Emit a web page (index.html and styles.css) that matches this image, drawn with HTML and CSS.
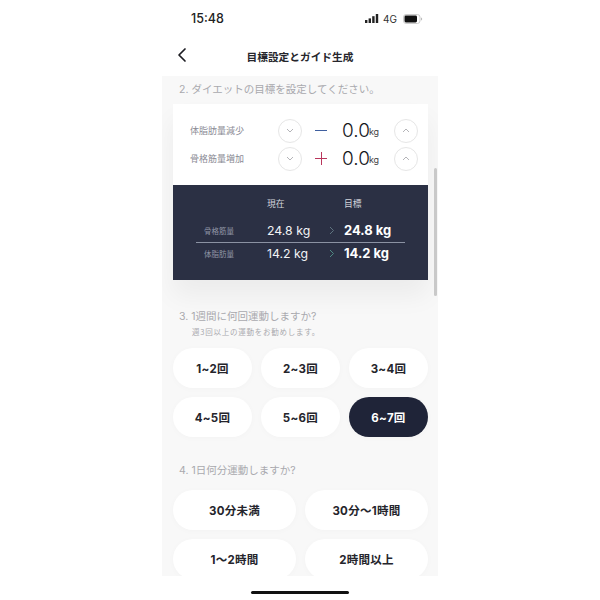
FILE: index.html
```html
<!DOCTYPE html>
<html lang="ja">
<head>
<meta charset="utf-8">
<title>目標設定とガイド生成</title>
<link rel="stylesheet" href="styles.css">
</head>
<body>
<div class="phone">
  <div class="status">
    <span class="time">15:48</span>
    <span class="status-right">
      <svg class="signal" width="14" height="9" viewBox="0 0 14 9"><rect x="0" y="6" width="2.4" height="3"/><rect x="3.6" y="4.4" width="2.4" height="4.6"/><rect x="7.2" y="2.2" width="2.4" height="6.8"/><rect x="10.8" y="0" width="2.4" height="9"/></svg>
      <span class="net">4G</span>
      <svg class="battery" width="20" height="10" viewBox="0 0 20 10"><rect x="0.5" y="0.5" width="16.500" height="9" rx="2.6" fill="none" stroke="#ccc"/><rect x="1.5" y="1.5" width="12.500" height="7" rx="1.400" fill="#111"/><path d="M18 3.500v3c.8-.3 1.200-.8 1.200-1.500S18.800 3.800 18 3.500z" fill="#bbb"/></svg>
    </span>
  </div>
  <header class="nav">
    <svg class="back" width="10" height="16" viewBox="0 0 10 16"><path d="M8 2 2 8l6 6" fill="none" stroke="#1c1c22" stroke-width="1.700" stroke-linecap="round" stroke-linejoin="round"/></svg>
    <h1 class="title">目標設定とガイド生成</h1>
  </header>
  <main class="content">
    <div class="scrollbar"></div>
    <h2 class="q q-first">2. ダイエットの目標を設定してください。</h2>
    <section class="card">
      <div class="steppers">
        <div class="stepper">
          <span class="label">体脂肪量減少</span>
          <span class="circle"><svg width="8" height="5" viewBox="0 0 8 5"><path d="M1 1l3 3 3-3" class="chev"/></svg></span>
          <svg class="sign" width="12" height="13" viewBox="0 0 12 13"><path d="M0 6.500h12" stroke="#3f5f9f" stroke-width="1"/></svg>
          <span class="amount">0.0<small>kg</small></span>
          <span class="circle"><svg width="8" height="5" viewBox="0 0 8 5"><path d="M1 4l3-3 3 3" class="chev"/></svg></span>
        </div>
        <div class="stepper">
          <span class="label">骨格筋量増加</span>
          <span class="circle"><svg width="8" height="5" viewBox="0 0 8 5"><path d="M1 1l3 3 3-3" class="chev"/></svg></span>
          <svg class="sign" width="12" height="13" viewBox="0 0 12 13"><path d="M0 6.500h12M6.500 0v13" stroke="#b9365c" stroke-width="1"/></svg>
          <span class="amount">0.0<small>kg</small></span>
          <span class="circle"><svg width="8" height="5" viewBox="0 0 8 5"><path d="M1 4l3-3 3 3" class="chev"/></svg></span>
        </div>
      </div>
      <div class="summary">
        <div class="sum-row sum-head"><span></span><span>現在</span><span></span><span>目標</span></div>
        <div class="sum-row sum-line">
          <span class="sum-label">骨格筋量</span><span class="now">24.8 kg</span>
          <svg width="6" height="9" viewBox="0 0 6 9"><path d="M1 1l3.500 3.500L1 8" fill="none" stroke="#5f7480"/></svg>
          <b class="goal">24.8 kg</b>
        </div>
        <div class="sum-row sum-last">
          <span class="sum-label">体脂肪量</span><span class="now">14.2 kg</span>
          <svg width="6" height="9" viewBox="0 0 6 9"><path d="M1 1l3.500 3.500L1 8" fill="none" stroke="#4f8a84"/></svg>
          <b class="goal">14.2 kg</b>
        </div>
      </div>
    </section>
    <h2 class="q q-3">3. 1週間に何回運動しますか?</h2>
    <p class="hint">週3回以上の運動をお勧めします。</p>
    <div class="options three">
      <button class="opt">1~2回</button><button class="opt">2~3回</button><button class="opt">3~4回</button>
      <button class="opt">4~5回</button><button class="opt">5~6回</button><button class="opt on">6~7回</button>
    </div>
    <h2 class="q q-4">4. 1日何分運動しますか?</h2>
    <div class="options two">
      <button class="opt">30分未満</button><button class="opt">30分～1時間</button>
      <button class="opt">1～2時間</button><button class="opt">2時間以上</button>
    </div>
  </main>
  <div class="home"><span class="home-bar"></span></div>
</div>
</body>
</html>
```

FILE: styles.css
```css
* { box-sizing: border-box; }
html, body { margin: 0; padding: 0; background: #fff; }
body { font-family: Inter, "Noto Sans CJK JP", sans-serif; color: #1f2230; }
.phone { width: 276px; height: 600px; margin: 0 auto; display: flex; flex-direction: column; }
.status { height: 37px; padding: 10px 10px 0 29px; display: flex; justify-content: space-between; align-items: flex-start; }
.time { font-size: 12.500px; font-weight: 500; line-height: 17px; color: #222; }
.status-right { display: flex; align-items: center; gap: 4px; height: 17px; padding-right: 5px; }
.signal { fill: #222; }
.net { font-size: 10px; color: #333; margin-right: 2px; }
.nav { height: 39px; display: flex; align-items: center; justify-content: center; position: relative; }
.back { position: absolute; left: 15px; top: 10px; }
.title { margin: 0; font-size: 10.700px; font-weight: 700; color: #26262c; font-family: "Noto Sans CJK JP", sans-serif; }
.content { position: relative; height: 500px; overflow: hidden; background: #f8f8f8; padding: 0 10px 0 11px; }
.scrollbar { position: absolute; right: 1px; top: 92px; width: 3px; height: 128px; background: #c9c9c9; border-radius: 2px; }
.q { margin: 0; font-size: 10.500px; font-weight: 400; color: #a9a9ae; line-height: 16px; padding-left: 6px; font-family: Inter, "Noto Sans CJK JP", sans-serif; }
.q-first { padding-top: 6px; height: 28px; }
.card { background: #fff; box-shadow: 0 16px 24px rgba(0,0,0,.05); }
.steppers { height: 81px; padding-top: 14px; display: flex; flex-direction: column; gap: 3px; }
.stepper { display: flex; align-items: center; height: 25px; padding-left: 17px; }
.label { width: 88px; font-size: 9px; color: #8a8a94; font-family: "Noto Sans CJK JP", sans-serif; }
.circle { width: 24px; height: 24px; border: 1px solid #e6e6e6; border-radius: 50%; display: flex; align-items: center; justify-content: center; background: #fff; }
.chev { fill: none; stroke: #b4b4b8; stroke-width: 1; }
.sign { margin-left: 13px; }
.amount { width: 67px; padding-left: 15px; font-size: 19px; font-weight: 300; color: #17171c; white-space: nowrap; }
.amount small { font-size: 9px; font-weight: 400; color: #444; margin-left: -1px; vertical-align: 2px; }
.summary { height: 95px; background: #2b3044; padding: 9px 23px 0 23px; color: #fff; }
.sum-row { display: grid; grid-template-columns: 71px 62px 15px 1fr; align-items: center; height: 24px; }
.sum-head { height: 19px; font-size: 8.800px; color: #d4d6dd; margin-bottom: 5px; }
.sum-line { border-bottom: 1px solid #8b92a3; height: 25px; }
.sum-last { height: 20px; }
.sum-label { font-size: 7.500px; color: #8f94a5; padding-left: 8px; font-family: "Noto Sans CJK JP", sans-serif; }
.now { font-size: 12.300px; font-weight: 400; color: #f2f3f6; white-space: nowrap; }
.goal { font-size: 13px; font-weight: 700; color: #fff; white-space: nowrap; }
.q-3 { margin-top: 29px; }
.hint { margin: 0 0 10px; padding-left: 19px; font-size: 7.500px; letter-spacing: .75px; line-height: 13px; color: #a9a9ae; font-family: "Noto Sans CJK JP", sans-serif; }
.options { display: grid; gap: 9px; }
.three { grid-template-columns: repeat(3, 1fr); }
.two { grid-template-columns: repeat(2, 1fr); }
.opt { height: 40px; border: 0; border-radius: 20px; background: #fff; box-shadow: 0 1px 6px rgba(0,0,0,.025); font-family: Inter, "Noto Sans CJK JP", sans-serif; font-size: 11.500px; letter-spacing: .3px; font-weight: 700; color: #25252c; padding: 0; }
.opt.on { background: #1f2438; color: #fff; }
.q-4 { margin-top: 26px; margin-bottom: 11px; }
.home { height: 24px; display: flex; justify-content: center; padding-top: 15px; }
.home-bar { width: 98px; height: 3px; border-radius: 2px; background: #111; }
```
